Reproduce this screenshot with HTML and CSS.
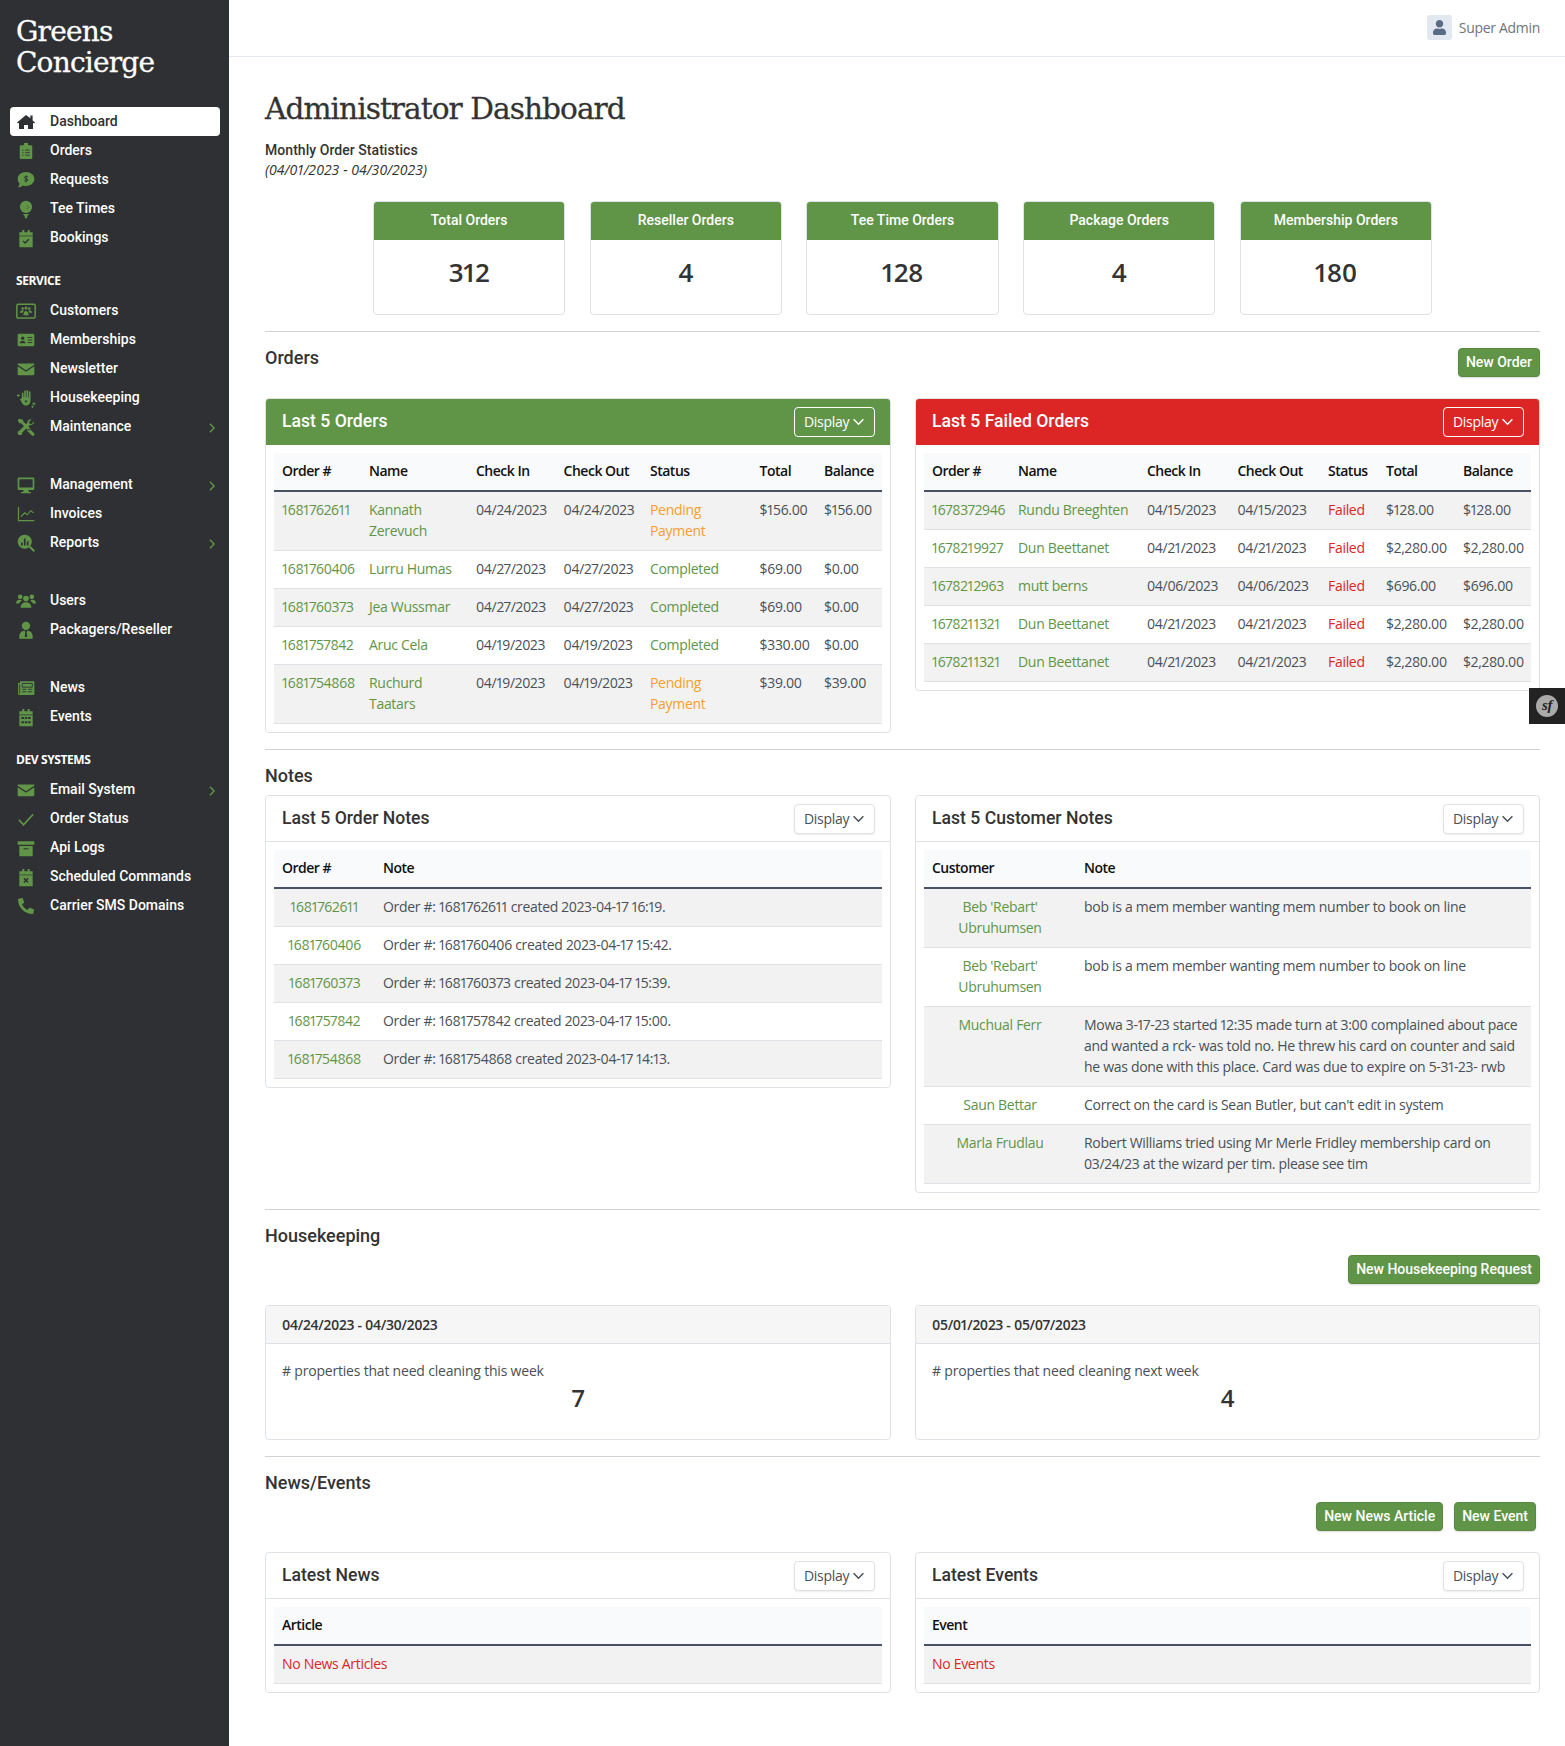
FILE: index.html
```html
<!DOCTYPE html>
<html lang="en">
<head>
<meta charset="UTF-8">
<meta name="viewport" content="width=device-width, initial-scale=1.0">
<title>Administrator Dashboard</title>
<link rel="stylesheet" href="styles.css">
</head>
<body>

<!-- icon sprite -->
<svg class="sprite" xmlns="http://www.w3.org/2000/svg">
  <symbol id="i-home" viewBox="-32 -32 640 576"><path d="M288 30L0 272l28 34 36-30v204h160V352h128v128h160V276l36 30 28-34-76-64V48h-72v90z"/></symbol>
  <symbol id="i-orders" viewBox="0 0 24 24"><path d="M9.5 2.5h5V5H18a1.5 1.5 0 0 1 1.500 1.500v13.500A1.500 1.500 0 0 1 18 21.500H6A1.500 1.500 0 0 1 4.500 20V6.500A1.500 1.500 0 0 1 6 5h3.500z"/><path d="M7.500 11h1.500M11 11h5.500M7.500 14h1.500M11 14h5.500M7.500 17h1.500M11 17h5.500" stroke="#2e3033" stroke-width="1"/></symbol>
  <symbol id="i-comment" viewBox="0 0 24 24"><path d="M12 2.500c5.800 0 10 3.700 10 8.300s-4.200 8.300-10 8.300c-1.400 0-2.700-.2-3.800-.6-1.500 1.300-3.500 2.300-6.200 2.300 1.200-1.200 2-2.700 2.200-4.400C2.900 14.800 2 12.900 2 10.800 2 6.200 6.200 2.500 12 2.500z"/><path d="M14.200 8.300c-1-.9-4-1-4.100.7 0 1.900 4.200 1 4.100 3 0 1.700-3.200 1.600-4.300.6M12 6.500v8.500" fill="none" stroke="#2e3033" stroke-width="1.100"/></symbol>
  <symbol id="i-golf" viewBox="0 0 24 24"><circle cx="12" cy="9.500" r="7.300"/><path d="M8 18h8l-2.500 2.500V23h-3v-2.500z"/><path d="M13 8.500h.8M15 10h.8M13 11.500h.8" stroke="#2e3033" stroke-width="1"/></symbol>
  <symbol id="i-cal-check" viewBox="0 0 24 24"><path d="M4 5h3.500V2.500h2.500V5h4V2.500h2.500V5H20v18H4z"/><path d="M4 9.500h16" stroke="#2e3033" stroke-width=".8"/><path d="M8.500 15.500l2.500 2.500 4.500-4.500" fill="none" stroke="#2e3033" stroke-width="1.500"/></symbol>
  <symbol id="i-users-box" viewBox="0 0 24 24"><rect x="1" y="4" width="22" height="16.500" rx="1.500" fill="none" stroke="currentColor" stroke-width="1.800"/><circle cx="8" cy="9" r="1.600"/><circle cx="12" cy="8.500" r="1.900"/><circle cx="16" cy="9" r="1.600"/><path d="M4.500 14c0-2 2-3 3.500-3 .6 0 1.200.2 1.600.4-1 .7-1.400 1.600-1.400 2.600zM19.500 14c0-2-2-3-3.500-3-.6 0-1.200.2-1.600.4 1 .7 1.400 1.600 1.400 2.600zM8.800 17c0-3 1.500-5 3.200-5s3.200 2 3.200 5z"/></symbol>
  <symbol id="i-idcard" viewBox="0 0 24 24"><rect x="2" y="4.500" width="20" height="15" rx="1.500"/><circle cx="8" cy="9.800" r="2" fill="#2e3033"/><path d="M4.500 16c0-2.200 1.700-3.200 3.500-3.200s3.500 1 3.500 3.200z" fill="#2e3033"/><path d="M14 9h5.500M14 12h5.500M14 15h5.500" stroke="#2e3033" stroke-width="1.100"/></symbol>
  <symbol id="i-mail" viewBox="0 0 24 24"><path d="M2.500 5.500h19a.5.5 0 0 1 .5.5v.9L12 13.500 2 6.900V6a.5.5 0 0 1 .5-.5zM2 8.800l10 6.600 10-6.600V18a1.500 1.500 0 0 1-1.500 1.500h-17A1.500 1.500 0 0 1 2 18z"/></symbol>
  <symbol id="i-hand" viewBox="0 0 24 24"><path d="M7 12.500V6.500a1 1 0 0 1 2 0V11h.8V4a1 1 0 0 1 2 0v7h.8V3.500a1 1 0 0 1 2 0V11h.8V5a1 1 0 0 1 2 0v10c0 3.500-2.200 6-5.200 6-2.300 0-3.600-1-4.800-2.800L5 14c-.6-1 1.300-2.200 2-1.500z"/><path d="M1 9h3.400M2.700 7.300v3.400M19.500 19h4M21.500 17v4M18.500 22.500h2.500M19.700 21.300v2.400" stroke="currentColor" stroke-width="1.200" fill="none"/><path d="M10.500 16h3M12 14.500v3" stroke="#2e3033" stroke-width="1.100"/></symbol>
  <symbol id="i-tools" viewBox="0 0 24 24"><path d="M3.500 2L2 3.500l2 4h2.200l9 9 2.300-2.300-9-9V3.200zM16 13.700l5.800 5.800a2 2 0 0 1-2.800 2.800L13.200 16.500z"/><path d="M21.500 5.500l-3 3-2.200-.5-.5-2.200 3-3c-2.600-.8-5.400 1.200-5.200 4.100L4 16.500c-2.800.1-2.700 5.200.6 5.200 2.400 0 3.300-1.800 2.900-3.200l8.800-8.700c2.800.4 5.900-1.900 5.200-4.300z"/></symbol>
  <symbol id="i-desktop" viewBox="0 0 24 24"><path d="M3.500 3h17A1.500 1.500 0 0 1 22 4.500v12a1.500 1.500 0 0 1-1.500 1.500H15l.5 2.500H18V22H6v-1.500h2.500L9 18H3.500A1.500 1.500 0 0 1 2 16.500v-12A1.500 1.500 0 0 1 3.500 3zM4 5v10h16V5z" fill-rule="evenodd"/></symbol>
  <symbol id="i-chart" viewBox="0 0 24 24"><path d="M3 3.500V20h19" fill="none" stroke="currentColor" stroke-width="1.500"/><path d="M6 15l4.500-4.500 3 2.500 4-5 3.500 2.500" fill="none" stroke="currentColor" stroke-width="1.300"/></symbol>
  <symbol id="i-search-chart" viewBox="0 0 24 24"><circle cx="10.500" cy="10.500" r="8.500"/><path d="M16.500 16.500l5.500 5.500" stroke="currentColor" stroke-width="2.600"/><path d="M7 15v-3.500M10.500 15V6.500M14 15v-5" stroke="#2e3033" stroke-width="2"/></symbol>
  <symbol id="i-users" viewBox="0 0 24 24"><circle cx="5" cy="7" r="2.800"/><circle cx="19" cy="7" r="2.800"/><circle cx="12" cy="9" r="3.400"/><path d="M0 15c0-3 1.800-4.500 4-4.500 1.200 0 2.200.4 3 1.100-1.700 1-2.800 2-3 3.400zM24 15c0-3-1.800-4.500-4-4.500-1.200 0-2.200.4-3 1.100 1.700 1 2.800 2 3 3.400zM5.500 20c0-4 2.800-6.500 6.500-6.500s6.500 2.500 6.500 6.500z"/></symbol>
  <symbol id="i-user-tie" viewBox="0 0 24 24"><circle cx="12" cy="7" r="5"/><path d="M4 22.500v-3c0-4 3-6.500 6.500-6.500l.7 1.500-.7 6h3l-.7-6 .7-1.500c3.500 0 6.500 2.500 6.500 6.500v3z"/></symbol>
  <symbol id="i-news" viewBox="0 0 24 24"><path d="M2.500 6H5V4h17v16.500H4.500a2 2 0 0 1-2-2zM4 7.500V18a.6.6 0 0 0 1 .5V7.500z" fill-rule="evenodd"/><path d="M7.500 6.500h12v4.500h-12zM7.500 13.500h5M7.500 16.500h5M14.500 13.500h5M14.500 16.500h5" fill="none" stroke="#2e3033" stroke-width="1.100"/></symbol>
  <symbol id="i-cal" viewBox="0 0 24 24"><path d="M4 5h3.500V2.500h2.500V5h4V2.500h2.500V5H20v18H4z"/><path d="M4 9.500h16" stroke="#2e3033" stroke-width=".9"/><path d="M6.500 12h3v2.500h-3zM10.500 12h3v2.500h-3zM14.500 12h3v2.500h-3zM6.500 17h3v2.500h-3zM10.500 17h3v2.500h-3zM14.500 17h3v2.500h-3z" fill="#2e3033"/></symbol>
  <symbol id="i-check" viewBox="0 0 24 24"><path d="M3.500 13l5.500 6L20.500 6.500" fill="none" stroke="currentColor" stroke-width="2"/></symbol>
  <symbol id="i-box" viewBox="0 0 24 24"><path d="M2 4h20v4H2zM4 9.500h16V22H4z"/><path d="M9 13h6" stroke="#2e3033" stroke-width="1.200"/></symbol>
  <symbol id="i-cal-x" viewBox="0 0 24 24"><path d="M4 5h3.500V2.500h2.500V5h4V2.500h2.500V5H20v18H4z"/><path d="M4 9.500h16" stroke="#2e3033" stroke-width=".8"/><path d="M9.500 13.500l5 5M14.500 13.500l-5 5" stroke="#2e3033" stroke-width="1.800"/></symbol>
  <symbol id="i-phone" viewBox="-64 -64 640 640"><path transform="matrix(-1 0 0 1 512 0)" d="M493.4 24.6l-104-24c-11.3-2.6-22.9 3.3-27.5 13.9l-48 112c-4.2 9.8-1.400 21.300 6.900 28l60.600 49.600c-36 76.700-98.900 140.500-177.200 177.200l-49.600-60.600c-6.800-8.300-18.200-11.100-28-6.900l-112 48C3.900 366.500-2 378.100.6 389.400l24 104C27.100 504.200 36.700 512 48 512c256.100 0 464-207.500 464-464 0-11.200-7.700-20.900-18.600-23.400z"/></symbol>
  <symbol id="i-user" viewBox="0 0 448 512"><path d="M224 256c70.700 0 128-57.300 128-128S294.700 0 224 0 96 57.300 96 128s57.300 128 128 128zm89.600 32h-16.700c-22.200 10.200-46.900 16-72.900 16s-50.600-5.800-72.900-16h-16.700C60.200 288 0 348.200 0 422.400V464c0 26.500 21.500 48 48 48h352c26.500 0 48-21.500 48-48v-41.600c0-74.200-60.200-134.400-134.400-134.400z"/></symbol>
  <symbol id="i-right" viewBox="0 0 24 24"><path d="M7 2l10 10L7 22" fill="none" stroke="currentColor" stroke-width="3.500"/></symbol>
  <symbol id="i-down" viewBox="0 0 24 24"><path d="M3 8l9 9 9-9" fill="none" stroke="currentColor" stroke-width="2.800"/></symbol>
</svg>

<div class="layout">

<aside class="sidebar">
    <div class="brand">Greens<br>Concierge</div>

    <ul class="nav">
        <li><a class="nav-link active" href="#"><svg class="nav-icon"><use href="#i-home"/></svg>Dashboard</a></li>
        <li><a class="nav-link" href="#"><svg class="nav-icon"><use href="#i-orders"/></svg>Orders</a></li>
        <li><a class="nav-link" href="#"><svg class="nav-icon"><use href="#i-comment"/></svg>Requests</a></li>
        <li><a class="nav-link" href="#"><svg class="nav-icon"><use href="#i-golf"/></svg>Tee Times</a></li>
        <li><a class="nav-link" href="#"><svg class="nav-icon"><use href="#i-cal-check"/></svg>Bookings</a></li>
    </ul>

    <div class="nav-title">SERVICE</div>
    <ul class="nav">
        <li><a class="nav-link" href="#"><svg class="nav-icon"><use href="#i-users-box"/></svg>Customers</a></li>
        <li><a class="nav-link" href="#"><svg class="nav-icon"><use href="#i-idcard"/></svg>Memberships</a></li>
        <li><a class="nav-link" href="#"><svg class="nav-icon"><use href="#i-mail"/></svg>Newsletter</a></li>
        <li><a class="nav-link" href="#"><svg class="nav-icon"><use href="#i-hand"/></svg>Housekeeping</a></li>
        <li><a class="nav-link" href="#"><svg class="nav-icon"><use href="#i-tools"/></svg>Maintenance<svg class="nav-arrow"><use href="#i-right"/></svg></a></li>
    </ul>

    <ul class="nav nav-spaced">
        <li><a class="nav-link" href="#"><svg class="nav-icon"><use href="#i-desktop"/></svg>Management<svg class="nav-arrow"><use href="#i-right"/></svg></a></li>
        <li><a class="nav-link" href="#"><svg class="nav-icon"><use href="#i-chart"/></svg>Invoices</a></li>
        <li><a class="nav-link" href="#"><svg class="nav-icon"><use href="#i-search-chart"/></svg>Reports<svg class="nav-arrow"><use href="#i-right"/></svg></a></li>
    </ul>

    <ul class="nav nav-spaced">
        <li><a class="nav-link" href="#"><svg class="nav-icon"><use href="#i-users"/></svg>Users</a></li>
        <li><a class="nav-link" href="#"><svg class="nav-icon"><use href="#i-user-tie"/></svg>Packagers/Reseller</a></li>
    </ul>

    <ul class="nav nav-spaced">
        <li><a class="nav-link" href="#"><svg class="nav-icon"><use href="#i-news"/></svg>News</a></li>
        <li><a class="nav-link" href="#"><svg class="nav-icon"><use href="#i-cal"/></svg>Events</a></li>
    </ul>

    <div class="nav-title">DEV SYSTEMS</div>
    <ul class="nav">
        <li><a class="nav-link" href="#"><svg class="nav-icon"><use href="#i-mail"/></svg>Email System<svg class="nav-arrow"><use href="#i-right"/></svg></a></li>
        <li><a class="nav-link" href="#"><svg class="nav-icon"><use href="#i-check"/></svg>Order Status</a></li>
        <li><a class="nav-link" href="#"><svg class="nav-icon"><use href="#i-box"/></svg>Api Logs</a></li>
        <li><a class="nav-link" href="#"><svg class="nav-icon"><use href="#i-cal-x"/></svg>Scheduled Commands</a></li>
        <li><a class="nav-link" href="#"><svg class="nav-icon"><use href="#i-phone"/></svg>Carrier SMS Domains</a></li>
    </ul>
</aside>

<div class="main">
    <header class="topbar">
        <span class="avatar"><svg class="avatar-icon"><use href="#i-user"/></svg></span>
        <span class="user-name">Super Admin</span>
    </header>

    <main class="content">
        <h1 class="page-title">Administrator Dashboard</h1>
        <div class="stats-intro">
            <strong>Monthly Order Statistics</strong>
            <em>(04/01/2023 - 04/30/2023)</em>
        </div>

        <div class="stat-row">
            <div class="stat"><div class="stat-head">Total Orders</div><div class="stat-num">312</div></div>
            <div class="stat"><div class="stat-head">Reseller Orders</div><div class="stat-num">4</div></div>
            <div class="stat"><div class="stat-head">Tee Time Orders</div><div class="stat-num">128</div></div>
            <div class="stat"><div class="stat-head">Package Orders</div><div class="stat-num">4</div></div>
            <div class="stat"><div class="stat-head">Membership Orders</div><div class="stat-num">180</div></div>
        </div>

        <hr>

        <!-- Orders -->
        <div class="section-head">
            <h2 class="section-title">Orders</h2>
            <a class="btn btn-inline" href="#">New Order</a>
        </div>
        <div class="two-col two-col-wide-gap">
            <div class="card">
                <div class="card-head head-green">
                    <h3>Last 5 Orders</h3>
                    <button class="display-btn">Display <svg class="down"><use href="#i-down"/></svg></button>
                </div>
                <div class="card-body">
                    <table class="table orders-table">
                        <thead><tr><th>Order #</th><th>Name</th><th>Check In</th><th>Check Out</th><th>Status</th><th>Total</th><th>Balance</th></tr></thead>
                        <tbody>
                            <tr><td><a href="#">1681762611</a></td><td><a href="#">Kannath Zerevuch</a></td><td>04/24/2023</td><td>04/24/2023</td><td class="pending">Pending Payment</td><td>$156.00</td><td>$156.00</td></tr>
                            <tr><td><a href="#">1681760406</a></td><td><a href="#">Lurru Humas</a></td><td>04/27/2023</td><td>04/27/2023</td><td class="completed">Completed</td><td>$69.00</td><td>$0.00</td></tr>
                            <tr><td><a href="#">1681760373</a></td><td><a href="#">Jea Wussmar</a></td><td>04/27/2023</td><td>04/27/2023</td><td class="completed">Completed</td><td>$69.00</td><td>$0.00</td></tr>
                            <tr><td><a href="#">1681757842</a></td><td><a href="#">Aruc Cela</a></td><td>04/19/2023</td><td>04/19/2023</td><td class="completed">Completed</td><td>$330.00</td><td>$0.00</td></tr>
                            <tr><td><a href="#">1681754868</a></td><td><a href="#">Ruchurd Taatars</a></td><td>04/19/2023</td><td>04/19/2023</td><td class="pending">Pending Payment</td><td>$39.00</td><td>$39.00</td></tr>
                        </tbody>
                    </table>
                </div>
            </div>
            <div class="card">
                <div class="card-head head-red">
                    <h3>Last 5 Failed Orders</h3>
                    <button class="display-btn">Display <svg class="down"><use href="#i-down"/></svg></button>
                </div>
                <div class="card-body">
                    <table class="table failed-table">
                        <thead><tr><th>Order #</th><th>Name</th><th>Check In</th><th>Check Out</th><th>Status</th><th>Total</th><th>Balance</th></tr></thead>
                        <tbody>
                            <tr><td><a href="#">1678372946</a></td><td><a href="#">Rundu Breeghten</a></td><td>04/15/2023</td><td>04/15/2023</td><td class="failed">Failed</td><td>$128.00</td><td>$128.00</td></tr>
                            <tr><td><a href="#">1678219927</a></td><td><a href="#">Dun Beettanet</a></td><td>04/21/2023</td><td>04/21/2023</td><td class="failed">Failed</td><td>$2,280.00</td><td>$2,280.00</td></tr>
                            <tr><td><a href="#">1678212963</a></td><td><a href="#">mutt berns</a></td><td>04/06/2023</td><td>04/06/2023</td><td class="failed">Failed</td><td>$696.00</td><td>$696.00</td></tr>
                            <tr><td><a href="#">1678211321</a></td><td><a href="#">Dun Beettanet</a></td><td>04/21/2023</td><td>04/21/2023</td><td class="failed">Failed</td><td>$2,280.00</td><td>$2,280.00</td></tr>
                            <tr><td><a href="#">1678211321</a></td><td><a href="#">Dun Beettanet</a></td><td>04/21/2023</td><td>04/21/2023</td><td class="failed">Failed</td><td>$2,280.00</td><td>$2,280.00</td></tr>
                        </tbody>
                    </table>
                </div>
            </div>
        </div>

        <hr>

        <!-- Notes -->
        <h2 class="section-title">Notes</h2>
        <div class="two-col">
            <div class="card">
                <div class="card-head">
                    <h3>Last 5 Order Notes</h3>
                    <button class="display-btn">Display <svg class="down"><use href="#i-down"/></svg></button>
                </div>
                <div class="card-body">
                    <table class="table order-notes">
                        <thead><tr><th>Order #</th><th>Note</th></tr></thead>
                        <tbody>
                            <tr><td><a href="#">1681762611</a></td><td>Order #: 1681762611 created 2023-04-17 16:19.</td></tr>
                            <tr><td><a href="#">1681760406</a></td><td>Order #: 1681760406 created 2023-04-17 15:42.</td></tr>
                            <tr><td><a href="#">1681760373</a></td><td>Order #: 1681760373 created 2023-04-17 15:39.</td></tr>
                            <tr><td><a href="#">1681757842</a></td><td>Order #: 1681757842 created 2023-04-17 15:00.</td></tr>
                            <tr><td><a href="#">1681754868</a></td><td>Order #: 1681754868 created 2023-04-17 14:13.</td></tr>
                        </tbody>
                    </table>
                </div>
            </div>
            <div class="card">
                <div class="card-head">
                    <h3>Last 5 Customer Notes</h3>
                    <button class="display-btn">Display <svg class="down"><use href="#i-down"/></svg></button>
                </div>
                <div class="card-body">
                    <table class="table customer-notes">
                        <thead><tr><th>Customer</th><th>Note</th></tr></thead>
                        <tbody>
                            <tr><td><a href="#">Beb 'Rebart' Ubruhumsen</a></td><td>bob is a mem member wanting mem number to book on line</td></tr>
                            <tr><td><a href="#">Beb 'Rebart' Ubruhumsen</a></td><td>bob is a mem member wanting mem number to book on line</td></tr>
                            <tr><td><a href="#">Muchual Ferr</a></td><td>Mowa 3-17-23 started 12:35 made turn at 3:00 complained about pace and wanted a rck- was told no. He threw his card on counter and said he was done with this place. Card was due to expire on 5-31-23- rwb</td></tr>
                            <tr><td><a href="#">Saun Bettar</a></td><td>Correct on the card is Sean Butler, but can't edit in system</td></tr>
                            <tr><td><a href="#">Marla Frudlau</a></td><td>Robert Williams tried using Mr Merle Fridley membership card on 03/24/23 at the wizard per tim. please see tim</td></tr>
                        </tbody>
                    </table>
                </div>
            </div>
        </div>

        <hr>

        <!-- Housekeeping -->
        <h2 class="section-title">Housekeeping</h2>
        <div class="btn-row">
            <a class="btn" href="#">New Housekeeping Request</a>
        </div>
        <div class="two-col">
            <div class="card">
                <div class="week-head">04/24/2023 - 04/30/2023</div>
                <div class="week-body">
                    <p># properties that need cleaning this week</p>
                    <div class="week-num">7</div>
                </div>
            </div>
            <div class="card">
                <div class="week-head">05/01/2023 - 05/07/2023</div>
                <div class="week-body">
                    <p># properties that need cleaning next week</p>
                    <div class="week-num">4</div>
                </div>
            </div>
        </div>

        <hr>

        <!-- News/Events -->
        <h2 class="section-title">News/Events</h2>
        <div class="btn-row btn-row-news">
            <a class="btn" href="#">New News Article</a>
            <a class="btn" href="#">New Event</a>
        </div>
        <div class="two-col">
            <div class="card">
                <div class="card-head">
                    <h3>Latest News</h3>
                    <button class="display-btn">Display <svg class="down"><use href="#i-down"/></svg></button>
                </div>
                <div class="card-body">
                    <table class="table">
                        <thead><tr><th>Article</th></tr></thead>
                        <tbody><tr><td class="failed">No News Articles</td></tr></tbody>
                    </table>
                </div>
            </div>
            <div class="card">
                <div class="card-head">
                    <h3>Latest Events</h3>
                    <button class="display-btn">Display <svg class="down"><use href="#i-down"/></svg></button>
                </div>
                <div class="card-body">
                    <table class="table">
                        <thead><tr><th>Event</th></tr></thead>
                        <tbody><tr><td class="failed">No Events</td></tr></tbody>
                    </table>
                </div>
            </div>
        </div>
    </main>
</div>

</div>

<!-- debug toolbar tab -->
<div class="sf-tab"><span class="sf-logo">sf</span></div>

</body>
</html>
```

FILE: styles.css
```css
* {
    box-sizing: border-box;
}
body {
    margin: 0;
    background-color: #ffffff;
    font-family: "Open Sans", "Noto Sans", Arial, sans-serif;
    font-size: 14px;
    line-height: 21px;
    letter-spacing: -0.3px;
    font-variant-numeric: proportional-nums;
    color: #495057;
    position: relative;
}
a {
    color: #609548;
    text-decoration: none;
}
.sprite {
    display: none;
}
.layout {
    display: flex;
    min-height: 100vh;
}

/* Sidebar */
.sidebar {
    width: 229px;
    flex-shrink: 0;
    background-color: #2e3033;
    color: #ffffff;
    padding: 16px 9px 0 10px;
}
.brand {
    font-family: "DejaVu Serif", "Liberation Serif", serif;
    font-size: 28px;
    line-height: 31px;
    letter-spacing: -0.8px;
    -webkit-text-stroke: 0.3px #ffffff;
    padding-left: 6px;
    margin-bottom: 29px;
}
.nav {
    list-style: none;
    margin: 0;
    padding: 0;
}
.nav-spaced {
    margin-top: 29px;
}
.nav-link {
    display: flex;
    align-items: center;
    height: 29px;
    padding: 0 6px;
    color: #ffffff;
    border-radius: 4px;
    font-family: Roboto, "Open Sans", sans-serif;
    font-weight: 500;
    letter-spacing: 0;
}
.nav-link.active {
    background-color: #ffffff;
    color: #2e3033;
}
.nav-icon {
    width: 20px;
    height: 20px;
    margin-right: 14px;
    fill: #609548;
    color: #609548;
    flex-shrink: 0;
}
.active .nav-icon {
    fill: #2e3033;
    color: #2e3033;
}
.nav-arrow {
    width: 10px;
    height: 10px;
    margin: 2px -3px 0 auto;
    color: #609548;
}
.nav-title {
    font-size: 12px;
    font-weight: 700;
    line-height: 18px;
    padding-left: 6px;
    margin: 20px 0 6px;
    letter-spacing: -0.4px;
}

/* Top bar */
.main {
    flex: 1;
    min-width: 0;
}
.topbar {
    height: 57px;
    border-bottom: 1px solid #e5e9f0;
    display: flex;
    align-items: center;
    justify-content: flex-end;
    padding: 0 25px 2px 0;
}
.avatar {
    width: 25px;
    height: 25px;
    background-color: #e2e8f0;
    border-radius: 3px;
    display: flex;
    align-items: center;
    justify-content: center;
    margin-right: 7px;
}
.avatar-icon {
    width: 13px;
    height: 15px;
    fill: #5a6b85;
}
.user-name {
    color: #6c757d;
}

/* Main content */
.content {
    padding: 31px 25px 0 36px;
}
.page-title {
    font-family: "DejaVu Serif", "Liberation Serif", serif;
    font-size: 29.6px;
    font-weight: 400;
    line-height: 40px;
    letter-spacing: -0.95px;
    -webkit-text-stroke: 0.3px #333333;
    color: #333333;
    padding-top: 1px;
    margin: 0 0 12px;
}
.stats-intro {
    line-height: 19px;
    color: #333333;
    margin-bottom: 22px;
}
.stats-intro strong {
    display: block;
    font-family: Roboto, "Open Sans", sans-serif;
    font-weight: 500;
    letter-spacing: 0.05px;
}
.stats-intro em {
    display: block;
    letter-spacing: 0;
}
.stat-row {
    display: flex;
    justify-content: center;
    gap: 24.2px;
}
.stat {
    width: 192.5px;
    height: 114px;
    border: 1px solid #dee2e6;
    border-radius: 4px;
    overflow: hidden;
}
.stat-head {
    height: 38px;
    background-color: #609548;
    color: #ffffff;
    text-align: center;
    font-family: Roboto, "Open Sans", sans-serif;
    font-weight: 500;
    letter-spacing: 0;
    line-height: 36px;
}
.stat-num {
    text-align: center;
    font-size: 26px;
    font-weight: 600;
    line-height: 40px;
    padding-top: 12px;
    color: #333333;
}
hr {
    border: 0;
    border-top: 1px solid #cfd2d6;
    margin: 16px 0 0;
}
.section-head {
    display: flex;
    justify-content: space-between;
    align-items: flex-start;
}
.section-title {
    font-family: Roboto, "Open Sans", sans-serif;
    font-size: 18px;
    font-weight: 500;
    letter-spacing: 0;
    line-height: 26px;
    color: #333333;
    margin: 13px 0 6px;
}
.btn-inline {
    margin-top: 16px;
}
.btn {
    display: inline-block;
    height: 29px;
    line-height: 27px;
    padding: 0 7px;
    background-color: #609548;
    border: 1px solid #578a40;
    border-radius: 4px;
    color: #ffffff;
    font-family: Roboto, "Open Sans", sans-serif;
    font-weight: 500;
    letter-spacing: 0;
    box-shadow: 0 1px 2px rgba(0, 0, 0, 0.15);
}
.btn-row {
    display: flex;
    justify-content: flex-end;
    gap: 11px;
    margin: 1px 0 21px;
}
.btn-row-news {
    padding-right: 4px;
}
.two-col {
    display: grid;
    grid-template-columns: 626px 1fr;
    gap: 24px;
    align-items: start;
}
.two-col-wide-gap {
    margin-top: 21px;
}

/* Cards */
.card {
    border: 1px solid #dee2e6;
    border-radius: 4px;
    overflow: hidden;
    background-color: #ffffff;
}
.card-head {
    height: 46px;
    display: flex;
    align-items: center;
    justify-content: space-between;
    padding: 0 15px 0 16px;
    border-bottom: 1px solid #dee2e6;
}
.card-head h3 {
    margin: 0;
    font-family: Roboto, "Open Sans", sans-serif;
    font-size: 17.6px;
    font-weight: 500;
    letter-spacing: 0;
    color: #333333;
}
.head-green {
    background-color: #609548;
    border-bottom-color: #609548;
}
.head-red {
    background-color: #dc2626;
    border-bottom-color: #dc2626;
}
.head-green h3, .head-red h3 {
    color: #ffffff;
}
.display-btn {
    display: flex;
    align-items: center;
    gap: 3px;
    height: 30px;
    width: 81px;
    padding: 0 7px 1px 9px;
    background: #ffffff;
    border: 1px solid #dee2e6;
    border-radius: 4px;
    font: inherit;
    letter-spacing: inherit;
    color: #495057;
    box-shadow: 0 1px 2px rgba(0, 0, 0, 0.08);
}
.head-green .display-btn, .head-red .display-btn {
    background: transparent;
    border-color: #ffffff;
    color: #ffffff;
    box-shadow: none;
}
.down {
    width: 13px;
    height: 13px;
}
.card-body {
    padding: 8px;
}

/* Tables */
.table {
    width: 100%;
    table-layout: fixed;
    border-collapse: separate;
    border-spacing: 0;
}
.table th {
    background-color: #f8fafc;
    border-bottom: 2px solid #495264;
    color: #111111;
    text-align: left;
    font-weight: 600;
    letter-spacing: -0.5px;
    padding: 7px 8px 9px;
    white-space: nowrap;
}
.table td {
    padding: 7px 8px 9px;
    border-bottom: 1px solid #dee2e6;
    vertical-align: top;
}
.table tbody tr:nth-child(odd) td {
    background-color: #f2f2f2;
}
.pending { color: #f59f2e; }
.completed { color: #609548; }
.failed { color: #dc2626; }

.orders-table th:nth-child(1) { width: 87px; }
.orders-table th:nth-child(2) { width: 107px; }
.orders-table th:nth-child(3) { width: 87.6px; }
.orders-table th:nth-child(4) { width: 86.4px; }
.orders-table th:nth-child(5) { width: 109.6px; }
.orders-table th:nth-child(6) { width: 64.4px; }

.failed-table th:nth-child(1) { width: 86px; }
.failed-table th:nth-child(2) { width: 129px; }
.failed-table th:nth-child(3) { width: 90.5px; }
.failed-table th:nth-child(4) { width: 90.5px; }
.failed-table th:nth-child(5) { width: 58px; }
.failed-table th:nth-child(6) { width: 77px; }

.order-notes th:first-child { width: 101px; }
.customer-notes th:first-child { width: 152px; }
.order-notes td:first-child, .customer-notes td:first-child {
    text-align: center;
}

/* Housekeeping */
.week-head {
    height: 38px;
    line-height: 37px;
    padding: 0 16px;
    background-color: #f6f6f6;
    border-bottom: 1px solid #dee2e6;
    color: #333333;
    font-weight: 600;
}
.week-body {
    height: 95px;
    padding: 16px;
}
.week-body p {
    margin: 0;
    color: #495057;
    letter-spacing: -0.2px;
}
.week-num {
    text-align: center;
    font-size: 24px;
    font-weight: 600;
    line-height: 32px;
    margin-top: 1px;
    color: #333333;
}

/* Debug toolbar tab */
.sf-tab {
    position: absolute;
    top: 688px;
    right: 0;
    width: 36px;
    height: 36px;
    background-color: #222222;
    display: flex;
    align-items: center;
    justify-content: center;
}
.sf-logo {
    width: 22px;
    height: 22px;
    border-radius: 50%;
    background-color: #aaaaaa;
    color: #222222;
    font-family: "Liberation Serif", serif;
    font-style: italic;
    font-weight: 700;
    font-size: 15px;
    line-height: 21px;
    text-align: center;
}
```
